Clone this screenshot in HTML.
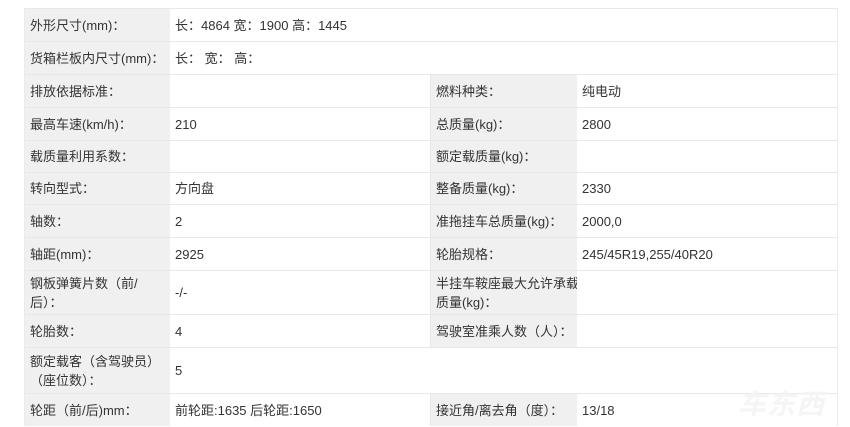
<!DOCTYPE html>
<html><head><meta charset="utf-8"><style>
html,body{margin:0;padding:0;background:#fff;width:850px;height:427px;overflow:hidden}
.c{position:absolute;box-sizing:border-box;display:flex;align-items:center;font-family:"Liberation Sans","Noto Sans CJK SC",sans-serif;font-size:13px;color:#333;line-height:19px;border-top:1px solid #e8e8e8;white-space:nowrap}
.l{background:#f0f0f0;padding-left:5px}
.v{background:#fff;padding-left:5px}
.wm{position:absolute;left:738px;top:383px;font-family:"Noto Sans CJK SC",sans-serif;font-size:28px;font-weight:bold;font-style:italic;color:#f5f5f5;letter-spacing:1px}
</style></head><body>
<div style="position:absolute;left:24px;top:8px;width:814px;height:418px;border:1px solid #ebebeb;box-sizing:border-box"></div>
<div id="t"></div>
<script>
var rows=[[8,41,"外形尺寸(mm)：","长：4864 宽：1900 高：1445"],
[41,74,"货箱栏板内尺寸(mm)：","长：&nbsp;宽：&nbsp;高："],
[74,107,"排放依据标准：","","燃料种类：","纯电动"],
[107,140,"最高车速(km/h)：","210","总质量(kg)：","2800"],
[140,172,"载质量利用系数：","","额定载质量(kg)：",""],
[172,204,"转向型式：","方向盘","整备质量(kg)：","2330"],
[204,237,"轴数：","2","准拖挂车总质量(kg)：","2000,0"],
[237,270,"轴距(mm)：","2925","轮胎规格：","245/45R19,255/40R20"],
[270,314,"钢板弹簧片数（前/<br>后）：","-/-","半挂车鞍座最大允许承载<br>质量(kg)：",""],
[314,347,"轮胎数：","4","驾驶室准乘人数（人）：",""],
[347,393,"额定载客（含驾驶员）<br>（座位数）：","5"],
[393,426,"轮距（前/后)mm：","前轮距:1635 后轮距:1650","接近角/离去角（度）：","13/18"]];
var h="";
rows.forEach(function(r){var t=r[0],ht=r[1]-r[0];
h+='<div class="c l" style="left:25px;top:'+t+'px;width:145px;height:'+ht+'px"><span>'+r[2]+'</span></div>';
if(r.length>4){
h+='<div class="c v" style="left:170px;top:'+t+'px;width:261px;height:'+ht+'px;border-right:1px solid #e8e8e8">'+r[3]+'</div>';
h+='<div class="c l" style="left:431px;top:'+t+'px;width:146px;height:'+ht+'px"><span>'+r[4]+'</span></div>';
h+='<div class="c v" style="left:577px;top:'+t+'px;width:260px;height:'+ht+'px">'+r[5]+'</div>';
}else{
h+='<div class="c v" style="left:170px;top:'+t+'px;width:667px;height:'+ht+'px">'+r[3]+'</div>';}
});
document.getElementById("t").innerHTML=h;
</script>
<div class="wm">车东西</div>
</body></html>
